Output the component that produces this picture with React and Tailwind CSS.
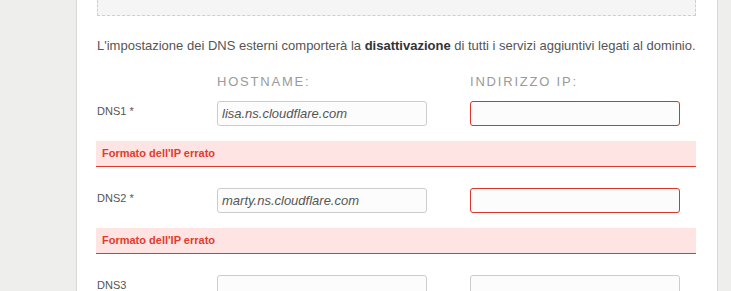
const rows = [
  { label: 'DNS1 *', host: 'lisa.ns.cloudflare.com', error: true },
  { label: 'DNS2 *', host: 'marty.ns.cloudflare.com', error: true },
  { label: 'DNS3', host: '', error: false },
];

const DnsRow = ({ label, host, error }) => (
  <div className="flex flex-col">
    <div className="flex items-start">
      <div className="w-[120px] pt-[2px] text-[11px] leading-[16px] text-[#555]">{label}</div>
      <input
        type="text"
        defaultValue={host}
        className="w-[210px] h-[25px] px-[4px] bg-[#fcfcfc] border border-[#cccccc] rounded-[3px] text-[13px] italic text-[#555] outline-none"
      />
      <input
        type="text"
        className={`ml-[43px] w-[210px] h-[25px] px-[4px] bg-[#fcfcfc] border rounded-[3px] outline-none ${error ? 'border-[#d9352a]' : 'border-[#cccccc]'}`}
      />
    </div>
    {error && (
      <div className="mt-[15px] mb-[21px] -ml-px h-[26px] flex items-center pl-[6px] bg-[#fee4e2] border-b border-[#e0382a] text-[11px] font-bold text-[#e23b2d]">
        Formato dell'IP errato
      </div>
    )}
  </div>
);

const App = () => {
  return (
    <div className="w-[731px] h-[291px] bg-[#eeeeec] overflow-hidden font-['Liberation_Sans',Arial,sans-serif]">
      <div className="ml-[76px] w-[642px] h-full bg-white border-x border-[#d8d8d6] pl-[20px] pr-[21px]">
        {/* tail of the box above */}
        <div className="h-[16px] bg-[#f5f5f5] border-x border-b border-dashed border-[#cfcfcf]" />

        <p className="mt-[20px] text-[13px] leading-[20px] text-[#555]">
          L'impostazione dei DNS esterni comporterà la <b className="text-[#333]">disattivazione</b> di tutti i servizi aggiuntivi legati al dominio.
        </p>

        <div className="mt-[18px] flex text-[13px] leading-[16px] tracking-[1.8px] text-[#9a9a9a]">
          <div className="w-[120px]" />
          <div className="w-[210px]">HOSTNAME:</div>
          <div className="ml-[43px] w-[210px]">INDIRIZZO IP:</div>
        </div>

        <div className="mt-[11px]">
          {rows.map((r) => (
            <DnsRow key={r.label} {...r} />
          ))}
        </div>
      </div>
    </div>
  );
};

export default App;
